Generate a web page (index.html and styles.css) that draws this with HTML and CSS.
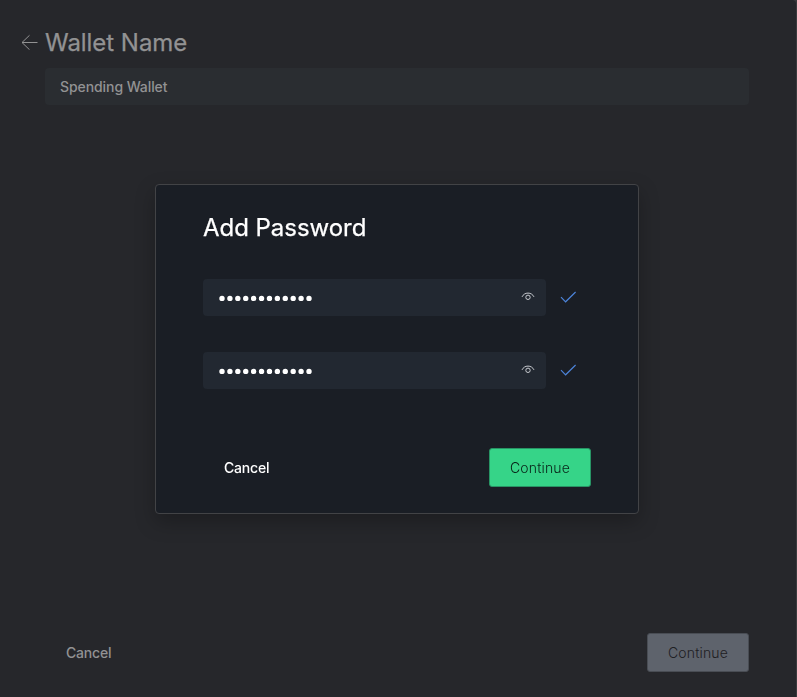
FILE: index.html
```html
<!DOCTYPE html>
<html lang="en">
<head>
<meta charset="utf-8">
<title>Add Password</title>
<link rel="stylesheet" href="styles.css">
</head>
<body>
<main class="window">
  <header class="page-head">
    <svg class="back" viewBox="0 0 17 16" width="17" height="16"><path d="M16.500 8.500H1M8.500 1.300L1 8.500l7.500 7.200"/></svg>
    <h1 class="title page-title">Wallet Name</h1>
  </header>
  <div class="field name-field"><span class="field-text">Spending Wallet</span></div>
  <footer class="actions page-actions">
    <button class="btn btn-text">Cancel</button>
    <button class="btn btn-solid btn-muted">Continue</button>
  </footer>
</main>
<div class="overlay">
  <section class="modal">
    <h2 class="title modal-title">Add Password</h2>
    <div class="row">
      <div class="field password">
        <svg class="dots" viewBox="0 0 96 8" width="96" height="8"><path d="M4 4.400H92"/></svg>
        <svg class="eye" viewBox="0 0 14 9" width="14" height="9"><path d="M1 4.900C2.300 2.400 4.300 1.100 7 1.100s4.700 1.300 6 3.800"/><circle cx="7" cy="5.300" r="2.200"/></svg>
      </div>
      <svg class="check" viewBox="0 0 16 12" width="16" height="12"><path d="M1 6.200L5.600 10.800 15.600 1"/></svg>
    </div>
    <div class="row">
      <div class="field password">
        <svg class="dots" viewBox="0 0 96 8" width="96" height="8"><path d="M4 4.400H92"/></svg>
        <svg class="eye" viewBox="0 0 14 9" width="14" height="9"><path d="M1 4.900C2.300 2.400 4.300 1.100 7 1.100s4.700 1.300 6 3.800"/><circle cx="7" cy="5.300" r="2.200"/></svg>
      </div>
      <svg class="check" viewBox="0 0 16 12" width="16" height="12"><path d="M1 6.200L5.600 10.800 15.600 1"/></svg>
    </div>
    <footer class="actions modal-actions">
      <button class="btn btn-text btn-bright">Cancel</button>
      <button class="btn btn-solid btn-primary">Continue</button>
    </footer>
  </section>
</div>
</body>
</html>
```
FILE: styles.css
```css
* { box-sizing: border-box; }
body {
  margin: 0;
  background: #3a3b3e;
  font-family: Inter, "Liberation Sans", sans-serif;
}
svg { fill: none; flex: none; }
.window {
  display: flex;
  flex-direction: column;
  width: 796px;
  height: 697px;
  padding: 27px 47px 25px 45px;
  background: #26272b;
  border-radius: 0 4px 0 0;
}
.page-head {
  display: flex;
  align-items: center;
  height: 32px;
  margin-left: -24px;
  gap: 7px;
}
.back { margin-bottom: 2px; stroke: #929293; stroke-width: 1; }
.title {
  margin: 0;
  font-size: 24px;
  line-height: 32px;
  font-weight: 400;
  letter-spacing: -.04px;
  -webkit-text-stroke: .25px currentColor;
  white-space: nowrap;
}
.page-title { color: #929293; }
.field {
  display: flex;
  align-items: center;
  height: 37px;
  border-radius: 4px;
}
.name-field {
  margin-top: 9px;
  padding-left: 15px;
  background: #2a2d31;
  color: #929293;
}
.field-text { font-size: 14px; font-weight: 500; letter-spacing: -.08px; }
.actions {
  display: flex;
  justify-content: space-between;
}
.page-actions { margin-top: auto; }
.btn {
  height: 39px;
  padding: 0;
  border: 1px solid transparent;
  background: none;
  font-family: inherit;
  font-size: 14px;
}
.btn-text { margin-left: 20px; font-weight: 500; letter-spacing: -.2px; color: #929293; }
.btn-bright { color: #fff; }
.btn-solid {
  width: 102px;
  border-radius: 3px;
  font-weight: 300;
  letter-spacing: .17px;
}
.btn-muted { background: #5e636c; border-color: #494d54; color: #1e2023; }
.btn-primary { background: #36d488; border-color: #289465; color: #092419; }
.overlay {
  position: fixed;
  inset: 0;
  display: flex;
  align-items: center;
  justify-content: center;
  padding: 1px 3px 0 0;
}
.modal {
  width: 484px;
  height: 330px;
  padding: 27px 47px;
  border: 1px solid #424346;
  border-radius: 4px;
  background: #1a1e25;
  box-shadow: 0 8px 20px rgba(0, 0, 0, .25);
}
.modal-title { margin-bottom: 35px; color: #fff; }
.row {
  display: flex;
  align-items: center;
  gap: 14px;
  margin-bottom: 36px;
}
.password {
  width: 343px;
  justify-content: space-between;
  padding: 0 11px 0 15px;
  background: #222831;
}
.dots {
  margin-top: 1px;
  stroke: #fff;
  stroke-width: 5.400;
  stroke-linecap: round;
  stroke-dasharray: 0 7.910;
}
.eye { margin-top: -3px; stroke: #c8cbd0; stroke-width: 1; }
.check { margin-bottom: 2px; stroke: #4c83d8; stroke-width: 1.200; }
.modal-actions { margin-top: 59px; }
```
